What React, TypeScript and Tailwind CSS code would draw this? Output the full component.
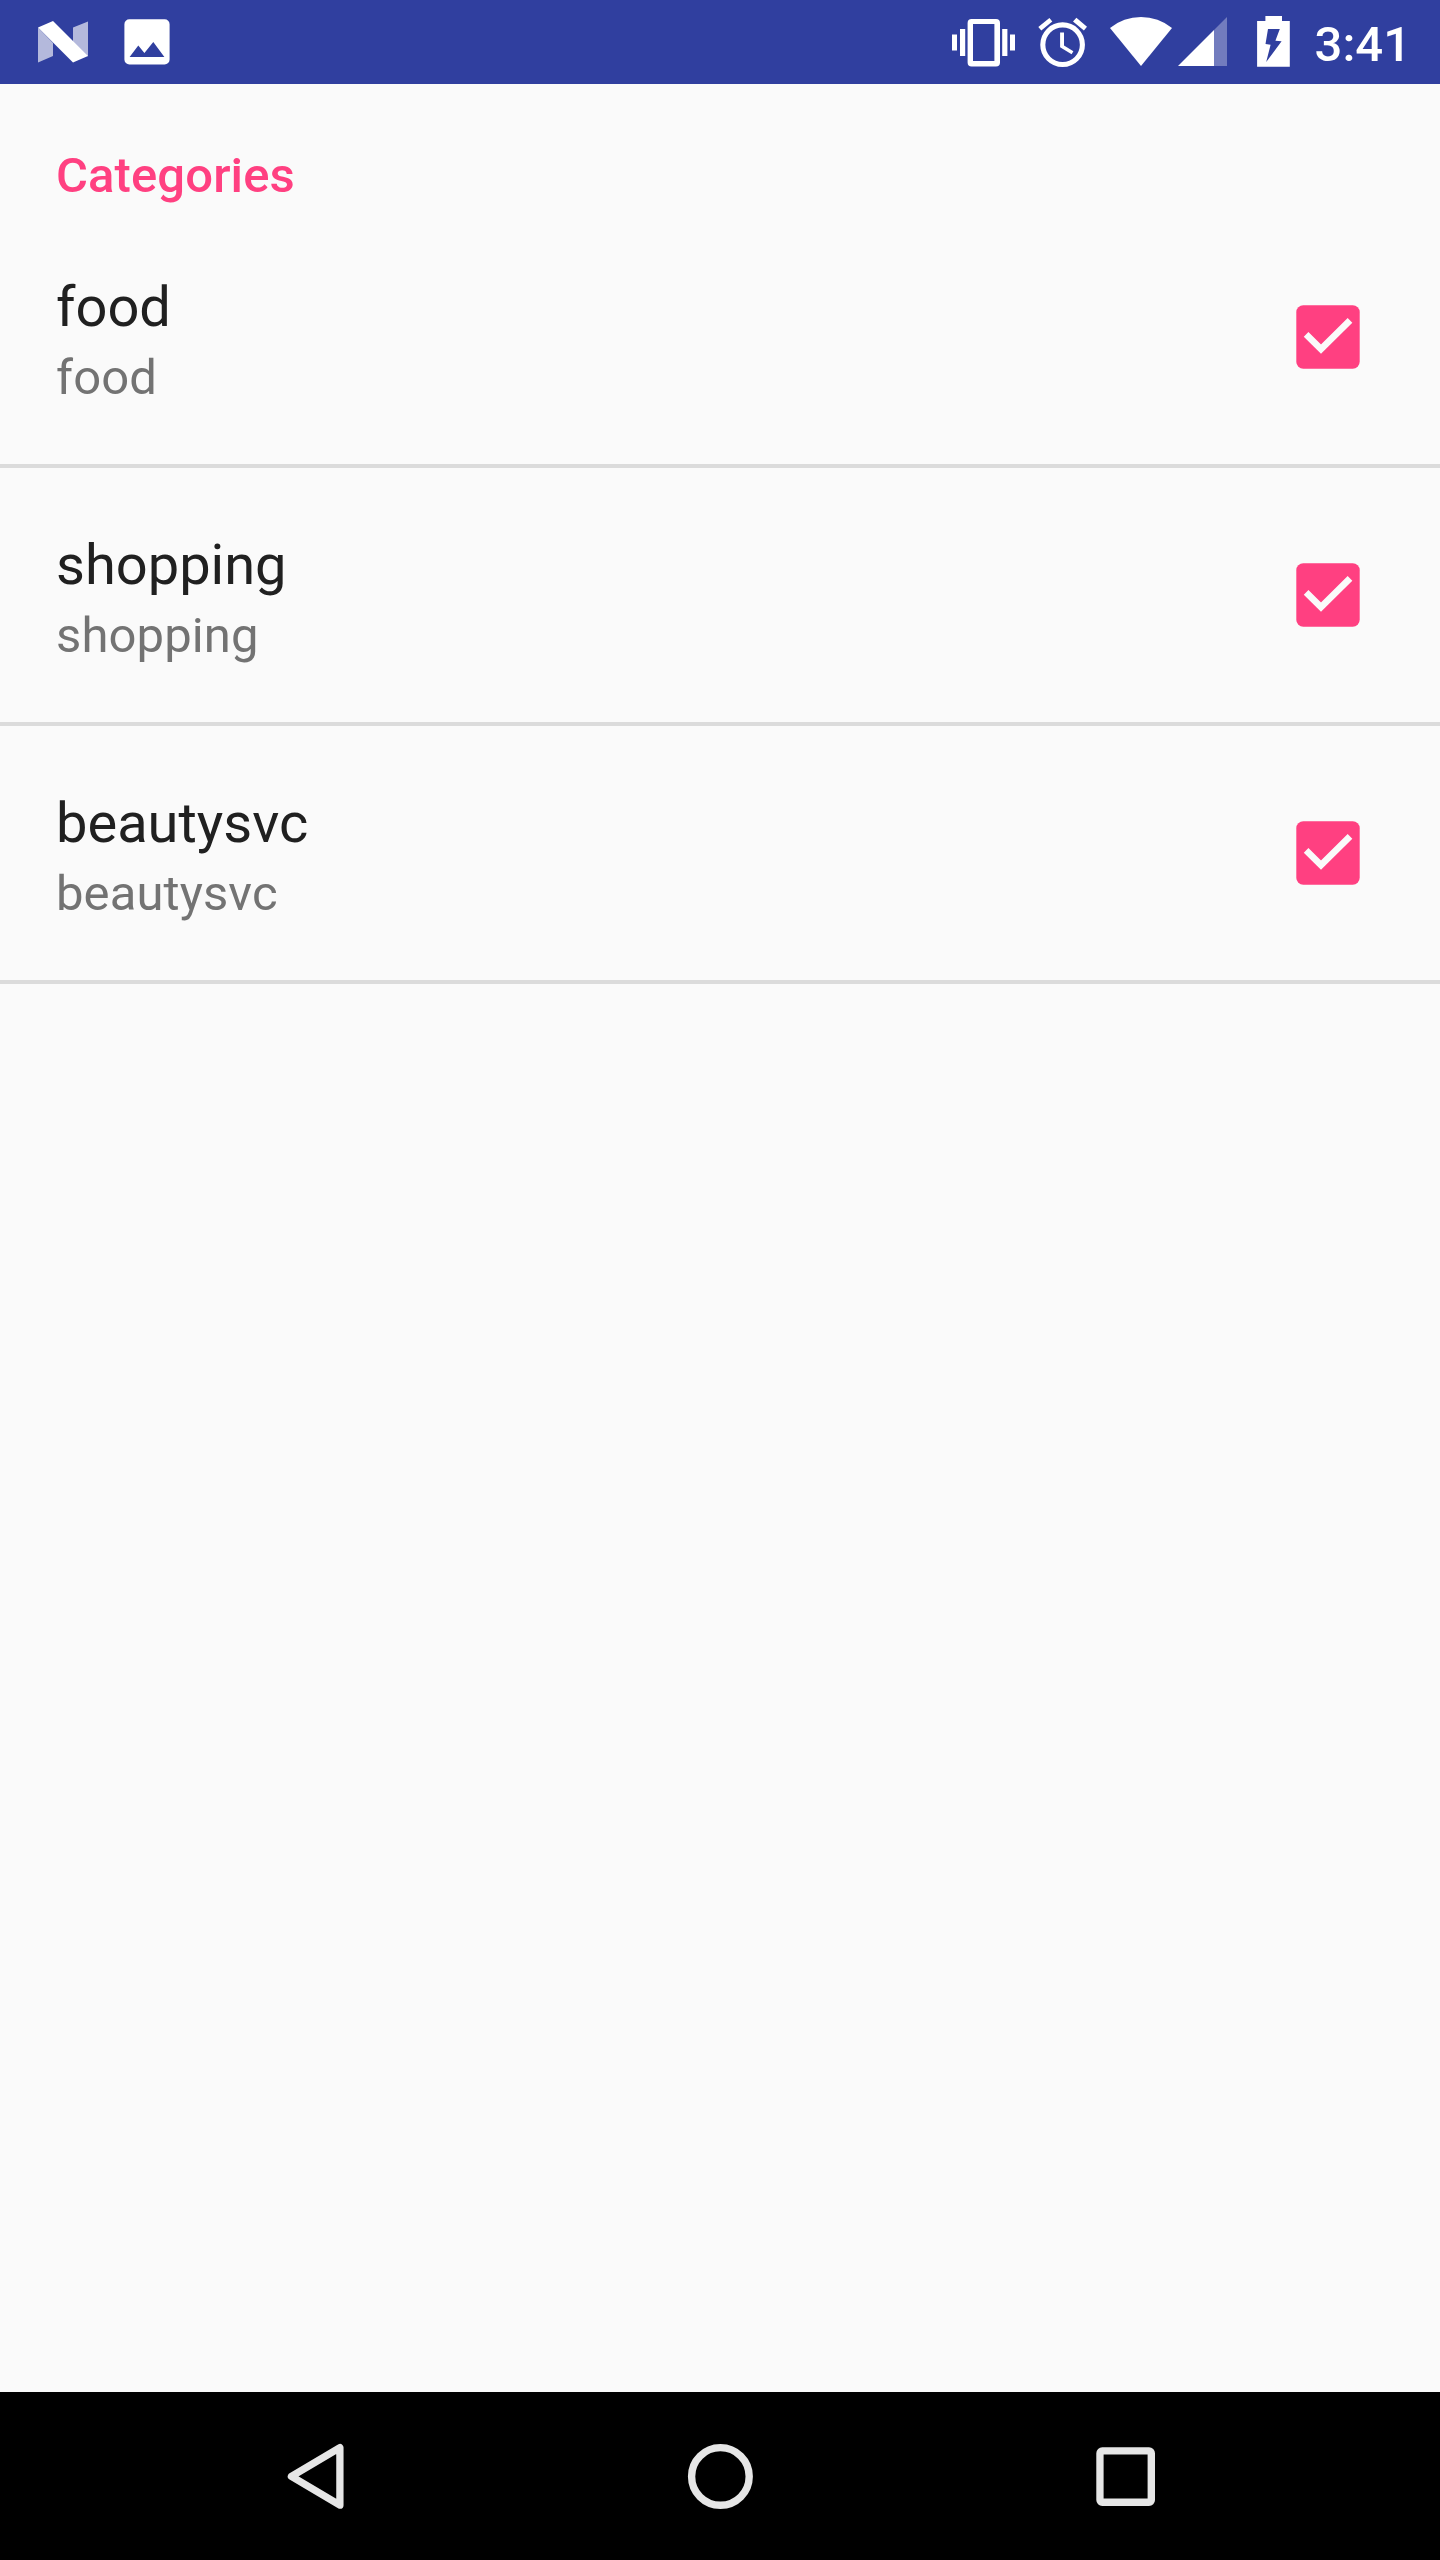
import { useState } from 'react';

interface Category {
  id: number;
  title: string;
  summary: string;
}

const categories: Category[] = [
  { id: 1, title: 'food', summary: 'food' },
  { id: 2, title: 'shopping', summary: 'shopping' },
  { id: 3, title: 'beautysvc', summary: 'beautysvc' },
];

function StatusBar() {
  return (
    <header className="flex h-[84px] shrink-0 items-start justify-between bg-[#303f9f] pl-[38px] pr-[29px] text-white">
      <div className="flex gap-9">
        {/* Nougat */}
        <svg width="50" height="84" viewBox="0 0 50 84" fill="currentColor">
          <path d="M0 27.5L15 43V56L0 62.5zM50 21.5V56.5L35 41.5V27.5z" opacity="0.64" />
          <path d="M0 27.5L15 21L50 56L35 62.5z" />
        </svg>
        {/* Screenshot */}
        <svg width="46" height="84" viewBox="0 0 46 84" fill="currentColor">
          <path
            fillRule="evenodd"
            d="M5.4 19.2H40.6a5 5 0 0 1 5 5V59.5a5 5 0 0 1-5 5H5.4a5 5 0 0 1-5-5V24.2a5 5 0 0 1 5-5zM5.6 57H40.4L29.3 42L20.4 53L14.3 45.6z"
          />
        </svg>
      </div>

      <div className="flex">
        {/* Vibrate */}
        <svg width="63" height="84" viewBox="0 0 63 84" fill="currentColor">
          <path d="M0 34.4h5v16.2H0zM8 29h5.2v27H8zM50.2 29h5.2v27h-5.2zM58 34.4h5v16.2h-5z" />
          <path
            fillRule="evenodd"
            d="M19.6 19H44a4 4 0 0 1 4 4V62.6a4 4 0 0 1-4 4H19.6a4 4 0 0 1-4-4V23a4 4 0 0 1 4-4zM21 24V61H42.4V24z"
          />
        </svg>
        {/* Alarm */}
        <svg className="ml-[23px]" width="50" height="84" viewBox="0 0 50 84" fill="currentColor">
          <circle cx="24.6" cy="44.7" r="19.8" fill="none" stroke="currentColor" strokeWidth="5.1" />
          <path d="M0.3 27L11.4 18L14.3 21.6L3.3 30.5zM38.4 17.8L49 26.8L45.9 30.4L35 21.4z" />
          <path d="M22.1 32.4H26V45.4L35.4 51.2L33.6 54.3L22.1 47.2z" />
        </svg>
        {/* Wifi */}
        <svg className="ml-[22px]" width="62" height="84" viewBox="0 0 62 84" fill="currentColor">
          <path d="M31 66L0 28A49 49 0 0 1 62 28z" />
        </svg>
        {/* Signal */}
        <svg className="ml-1.5" width="49" height="84" viewBox="0 0 49 84" fill="currentColor">
          <path d="M36 30L49 17V66H36z" opacity="0.32" />
          <path d="M0 66L36 30V66z" />
        </svg>
        {/* Battery */}
        <svg className="ml-[30px]" width="33" height="84" viewBox="0 0 33 84" fill="currentColor">
          <path
            fillRule="evenodd"
            d="M8.4 16.1H25V21.1H32.8V66.7H0.1V21.1H8.4zM11 29L8.5 44.1L13.6 44.7L9.2 62L24.6 41.3L18.4 40.7L22.8 29z"
          />
        </svg>
        <span className="ml-[25px] mt-4 text-[49px] font-medium leading-[57px]">3:41</span>
      </div>
    </header>
  );
}

function CheckBox({ checked }: { checked: boolean }) {
  return (
    <svg width="64" height="64" viewBox="0 0 64 64">
      {checked ? (
        <>
          <rect x="0.3" y="0.3" width="63.4" height="63.4" rx="7" fill="#ff4081" />
          <path d="M10.1 29.4L25 44.2L54 15.3" fill="none" stroke="#fafafa" strokeWidth="6.6" />
        </>
      ) : (
        <rect x="3.8" y="3.8" width="56.4" height="56.4" rx="4" fill="none" stroke="#737373" strokeWidth="7" />
      )}
    </svg>
  );
}

function NavigationBar() {
  return (
    <nav className="flex h-[168px] shrink-0 items-center justify-between bg-black pl-[284px] pr-[282px] text-[#e6e6e6]">
      <svg width="64" height="72" viewBox="284 2440 64 72" fill="none" stroke="currentColor" strokeWidth="7.3">
        <path d="M339.9 2447.6V2505.2L291.4 2476.4z" strokeLinejoin="round" />
      </svg>
      <svg width="72" height="72" viewBox="685 2440 72 72" fill="none" stroke="currentColor" strokeWidth="7.4">
        <circle cx="720.4" cy="2476.4" r="28.8" />
      </svg>
      <svg width="64" height="72" viewBox="1094 2440 64 72" fill="currentColor">
        <path
          fillRule="evenodd"
          d="M1102.3 2447.3H1149a6 6 0 0 1 6 6V2500a6 6 0 0 1-6 6H1102.3a6 6 0 0 1-6-6V2453.3a6 6 0 0 1 6-6zM1103.6 2454.6V2498.4H1147.6V2454.6z"
        />
      </svg>
    </nav>
  );
}

export default function App() {
  const [selected, setSelected] = useState<number[]>([1, 2, 3]);

  const toggle = (id: number) => {
    setSelected((prev) => (prev.includes(id) ? prev.filter((x) => x !== id) : [...prev, id]));
  };

  return (
    <div className="flex h-[2560px] w-[1440px] flex-col bg-[#fafafa] font-['Roboto',sans-serif]">
      <StatusBar />

      <main className="flex-1">
        <h2 className="h-[126px] px-14 pt-[63px] text-[49px] font-medium leading-[57px] tracking-[0.1px] text-[#ff4081]">
          Categories
        </h2>

        <ul>
          {categories.map((category) => (
            <li
              key={category.id}
              onClick={() => toggle(category.id)}
              className="flex h-[258px] items-center justify-between border-b-4 border-[#dbdbdb] pl-14 pr-20"
            >
              <div className="flex flex-col gap-[9px] pt-1.5">
                <span className="text-[56px] leading-[66px] text-[#202020]">{category.title}</span>
                <span className="text-[49px] leading-[57px] tracking-[0.1px] text-[#737373]">{category.summary}</span>
              </div>
              <CheckBox checked={selected.includes(category.id)} />
            </li>
          ))}
        </ul>
      </main>

      <NavigationBar />
    </div>
  );
}
